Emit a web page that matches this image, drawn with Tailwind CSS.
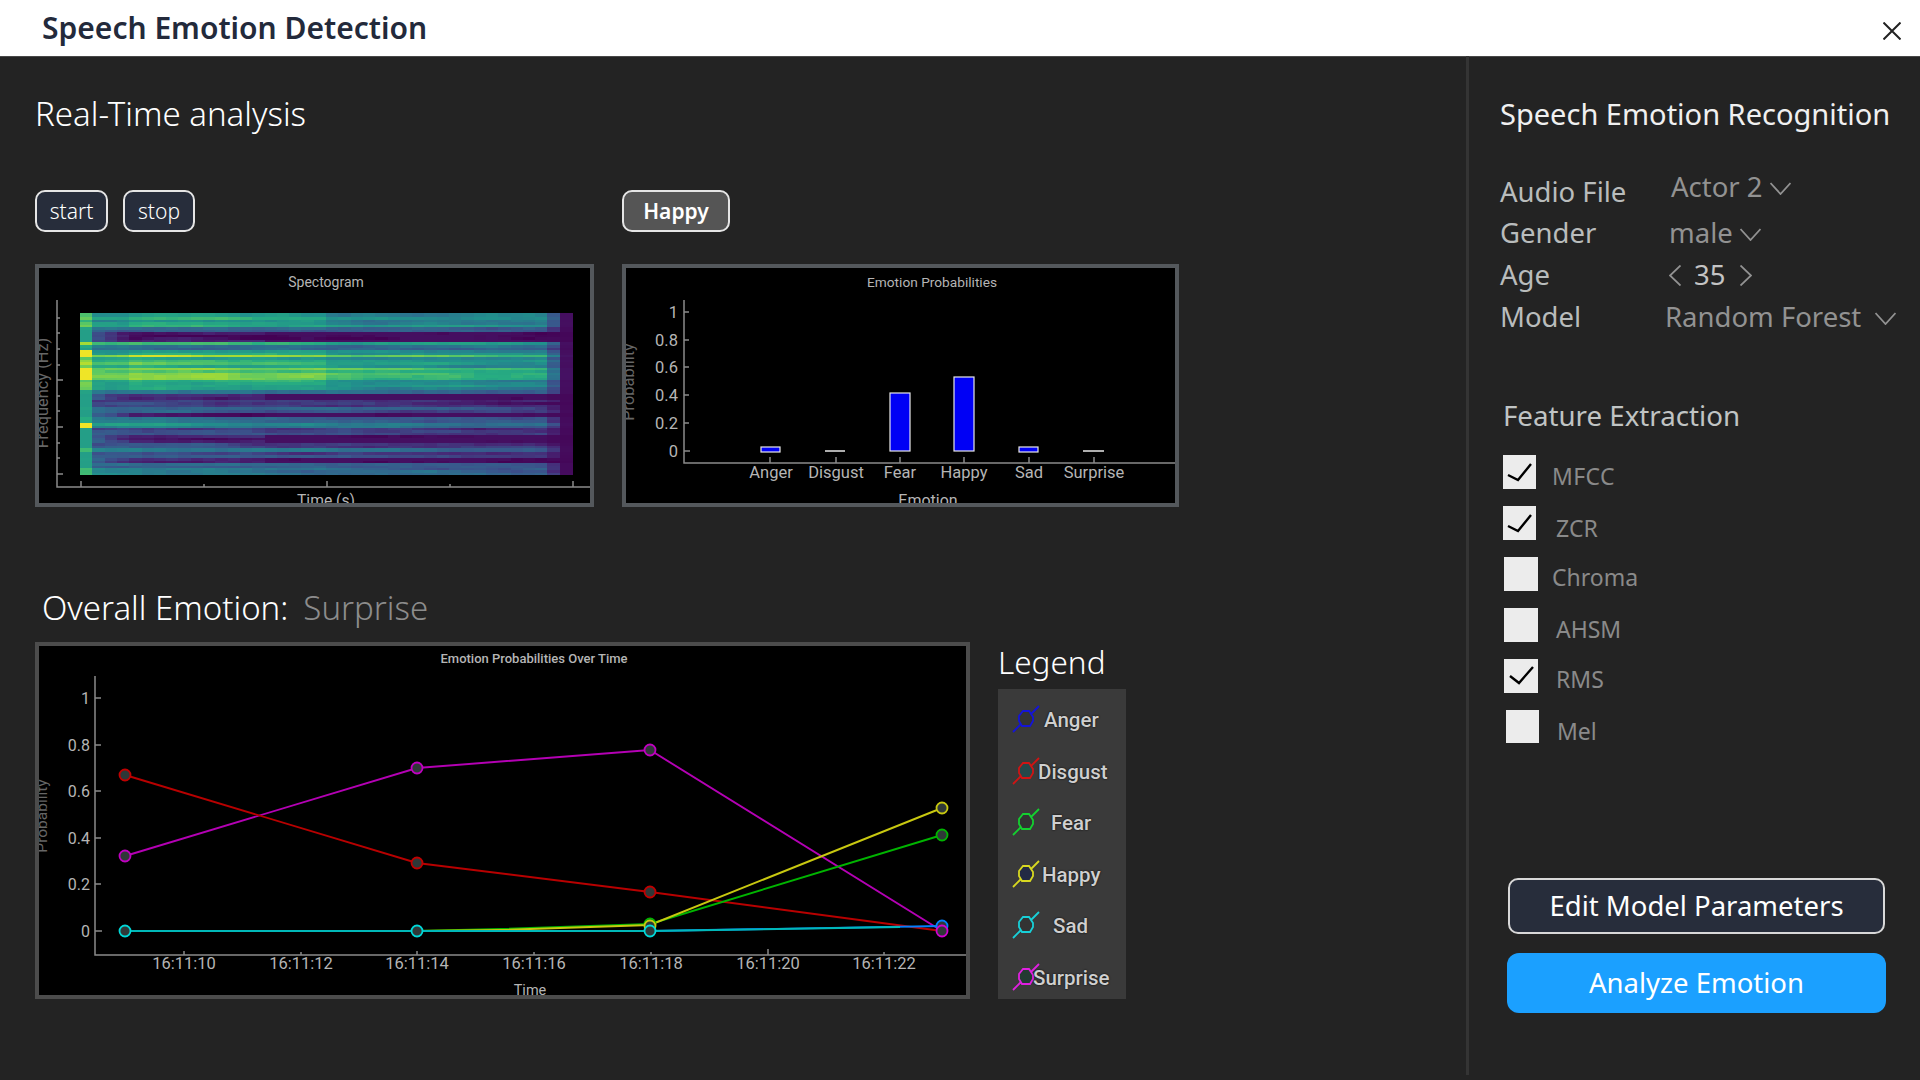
<!DOCTYPE html>
<html lang="en">
<head>
<meta charset="utf-8">
<title>Speech Emotion Detection</title>
<script src="https://cdn.jsdelivr.net/npm/@tailwindcss/browser@4"></script>
</head>
<body class="w-[1920px] h-[1080px] overflow-hidden bg-[#232323] font-['Noto_Sans',sans-serif] flex flex-col">
<header class="h-[56px] bg-white flex items-center justify-between pl-[42px] pr-[19px]">
  <h1 class="text-[30px] font-semibold text-[#232a3b] leading-none">Speech Emotion Detection</h1>
  <svg class="w-[18px] h-[18px] mt-[6px]" viewBox="0 0 18 18" fill="none" stroke="#222" stroke-width="2"><path d="M0.5 0.5 17.5 17.5M17.5 0.5 0.5 17.5"/></svg>
</header>
<main class="flex flex-1 shadow-[inset_0_1px_0_#484848]">
  <section class="w-[1469px] h-[1019px] pl-[35px] border-r-[3px] border-[#343434] flex flex-col">
    <h2 class="mt-[38px] h-[40px] leading-[40px] text-[33px] text-white font-light">Real-Time analysis</h2>
    <div class="mt-[56px] flex h-[42px]">
      <button class="w-[73px] h-[42px] pt-[2px] rounded-[10px] border-2 border-[#e5e5e5] bg-[#272d3b] text-white text-[21px] font-light">start</button>
      <button class="ml-[15px] w-[72px] h-[42px] pt-[2px] rounded-[10px] border-2 border-[#e5e5e5] bg-[#272d3b] text-white text-[21px] font-light">stop</button>
      <button class="ml-[427px] w-[108px] h-[42px] pt-[2px] rounded-[10px] border-2 border-[#e5e5e5] bg-[#555] text-white text-[21px] font-semibold">Happy</button>
    </div>
    <div class="mt-[32px] flex gap-[28px]">
      <div class="w-[559px] h-[243px] border-[4px] border-[#54585c] bg-black">
        <svg class="block font-['Roboto',sans-serif]" width="551" height="235" viewBox="39 268 551 235">
          <g id="spec" shape-rendering="crispEdges"></g>
          <text x="326" y="287" text-anchor="middle" class="fill-[#b5b5b5] text-[14px]">Spectogram</text>
          <path d="M57 300V487H590M81 481V487M327 481V487M573 481V487M204 484V487M450 484V487M57 380H63M57 427H63M57 474H63M57 333H60M57 318H60M57 349H60M57 365H60M57 396H60M57 411H60M57 443H60M57 458H60" stroke="#8a8a8a" stroke-width="1.5" fill="none"/>
          <text x="326" y="506" text-anchor="middle" class="fill-[#b5b5b5] text-[15.7px]">Time (s)</text>
          <text transform="translate(48 393) rotate(-90)" text-anchor="middle" class="fill-[#666] text-[16.4px]">Frequency (Hz)</text>
        </svg>
      </div>
      <div class="w-[557px] h-[243px] border-[4px] border-[#54585c] bg-black">
        <svg class="block font-['Roboto',sans-serif]" width="549" height="235" viewBox="626 268 549 235">
          <text x="932" y="287" text-anchor="middle" class="fill-[#b5b5b5] text-[13.7px]">Emotion Probabilities</text>
          <path d="M684 300V463H1175M684 312H689M684 340H689M684 367H689M684 395H689M684 423H689M684 451H690M770 457V463M836 457V463M900 457V463M964 457V463M1029 457V463M1094 457V463" stroke="#8a8a8a" stroke-width="1.5" fill="none"/>
          <g class="fill-[#b5b5b5] text-[16.5px]" text-anchor="end">
            <text x="678" y="318">1</text><text x="678" y="346">0.8</text><text x="678" y="373">0.6</text><text x="678" y="401">0.4</text><text x="678" y="429">0.2</text><text x="678" y="457">0</text>
          </g>
          <g fill="#0000f5" stroke="#e8e8e8" stroke-width="1.2">
            <rect x="761" y="447" width="19" height="5"/>
            <rect x="890" y="393" width="20" height="58"/>
            <rect x="954" y="377" width="20" height="74"/>
            <rect x="1019" y="447" width="19" height="5"/>
          </g>
          <path d="M825 451H845M1083 451H1104" stroke="#e8e8e8" stroke-width="1.5"/>
          <g class="fill-[#b5b5b5] text-[16.5px]" text-anchor="middle">
            <text x="771" y="478">Anger</text><text x="836" y="478">Disgust</text><text x="900" y="478">Fear</text><text x="964" y="478">Happy</text><text x="1029" y="478">Sad</text><text x="1094" y="478">Surprise</text>
          </g>
          <text x="928" y="506" text-anchor="middle" class="fill-[#b5b5b5] text-[16px]">Emotion</text>
          <text transform="translate(634 382) rotate(-90)" text-anchor="middle" class="fill-[#666] text-[16.4px]">Probability</text>
        </svg>
      </div>
    </div>
    <h2 class="mt-[81px] h-[40px] leading-[40px] pl-[7px] text-[33px] font-light text-white">Overall Emotion:<span class="ml-[15px] text-[#8c8c8c]">Surprise</span></h2>
    <div class="mt-[14px] flex gap-[28px]">
      <div class="w-[935px] h-[357px] border-[4px] border-[#4c4c4c] bg-black">
        <svg class="block font-['Roboto',sans-serif]" width="927" height="349" viewBox="39 646 927 349">
          <text x="534" y="663" text-anchor="middle" class="fill-[#b5b5b5] text-[13px] font-medium">Emotion Probabilities Over Time</text>
          <path d="M95 676V955H966M95 698H101M95 745H101M95 791H101M95 838H101M95 884H101M95 931H102M184 951V955M301 952V955M417 951V955M534 952V955M651 952V955M768 949V955M884 952V955" stroke="#8a8a8a" stroke-width="1.5" fill="none"/>
          <g class="fill-[#b5b5b5] text-[16px]" text-anchor="end">
            <text x="90" y="704">1</text><text x="90" y="751">0.8</text><text x="90" y="797">0.6</text><text x="90" y="844">0.4</text><text x="90" y="890">0.2</text><text x="90" y="937">0</text>
          </g>
          <g class="fill-[#b5b5b5] text-[16.5px]" text-anchor="middle">
            <text x="184" y="969">16:11:10</text><text x="301" y="969">16:11:12</text><text x="417" y="969">16:11:14</text><text x="534" y="969">16:11:16</text><text x="651" y="969">16:11:18</text><text x="768" y="969">16:11:20</text><text x="884" y="969">16:11:22</text>
          </g>
          <text x="530" y="995" text-anchor="middle" class="fill-[#b5b5b5] text-[14.5px]">Time</text>
          <text transform="translate(47 816) rotate(-90)" text-anchor="middle" class="fill-[#666] text-[15.5px]">Probability</text>
          <g fill="none" stroke-width="1.9">
            <polyline stroke="#b400b4" points="125,856 417,768 650,750 942,931"/>
            <polyline stroke="#b80000" points="125,775 417,863 650,892 942,931"/>
            <polyline stroke="#00b400" points="417,931 500,929 650,924 942,835"/>
            <polyline stroke="#c8c810" points="417,931 500,930 650,925 942,808"/>
            <polyline stroke="#0080ff" points="650,931 942,926"/>
            <polyline stroke="#00b8b8" points="125,931 417,931 650,931 900,927"/>
          </g>
          <g fill="#2f3838" stroke-width="1.8">
            <g stroke="#0080ff"><circle cx="942" cy="926" r="5.5"/></g>
            <g stroke="#c000c0"><circle cx="125" cy="856" r="5.5"/><circle cx="417" cy="768" r="5.5"/><circle cx="650" cy="750" r="5.5"/></g>
            <g stroke="#c00000"><circle cx="125" cy="775" r="5.5"/><circle cx="417" cy="863" r="5.5"/><circle cx="650" cy="892" r="5.5"/></g>
            <g stroke="#00b400"><circle cx="650" cy="924" r="5.5"/><circle cx="942" cy="835" r="5.5"/></g>
            <g stroke="#c8c810"><circle cx="650" cy="926" r="5.5"/><circle cx="942" cy="808" r="5.5"/></g>
            <g stroke="#00d8d8"><circle cx="125" cy="931" r="5.5"/><circle cx="417" cy="931" r="5.5"/><circle cx="650" cy="931" r="5.5"/></g>
            <g stroke="#d000d0"><circle cx="942" cy="931" r="5.5"/></g>
          </g>
        </svg>
      </div>
      <div class="w-[128px]">
        <h3 class="h-[47px] leading-[40px] text-[31.5px] font-light text-white">Legend</h3>
        <ul class="h-[310px] bg-[#3a3a3a] text-[20.5px] font-['Roboto',sans-serif] font-medium text-[#cfcfcf] [text-shadow:0_0_2px_#000] overflow-hidden">
          <li class="h-[51.5px] flex items-center pl-[14px] pt-[12px]">
            <svg class="w-[28px] h-[28px] -mt-[3px]" viewBox="0 0 28 28" fill="none" stroke="#1414d8" stroke-width="1.8"><path d="M1 27 9 19M19 9 27 1"/><path d="M11 6H17L21 12V16L18 21H10L7 16V11Z" fill="#333"/></svg>
            <span class="ml-[4px]">Anger</span>
          </li>
          <li class="h-[51.5px] flex items-center pl-[14px] pt-[12px]">
            <svg class="w-[28px] h-[28px] -mt-[3px]" viewBox="0 0 28 28" fill="none" stroke="#d01414" stroke-width="1.8"><path d="M1 27 9 19M19 9 27 1"/><path d="M11 6H17L21 12V16L18 21H10L7 16V11Z" fill="#24484a"/></svg>
            <span class="-ml-[2px]">Disgust</span>
          </li>
          <li class="h-[51.5px] flex items-center pl-[14px] pt-[12px]">
            <svg class="w-[28px] h-[28px] -mt-[3px]" viewBox="0 0 28 28" fill="none" stroke="#14d030" stroke-width="1.8"><path d="M1 27 9 19M19 9 27 1"/><path d="M11 6H17L21 12V16L18 21H10L7 16V11Z" fill="#333"/></svg>
            <span class="ml-[11px]">Fear</span>
          </li>
          <li class="h-[51.5px] flex items-center pl-[14px] pt-[12px]">
            <svg class="w-[28px] h-[28px] -mt-[3px]" viewBox="0 0 28 28" fill="none" stroke="#d8d820" stroke-width="1.8"><path d="M1 27 9 19M19 9 27 1"/><path d="M11 6H17L21 12V16L18 21H10L7 16V11Z" fill="#222a44"/></svg>
            <span class="ml-[2px]">Happy</span>
          </li>
          <li class="h-[51.5px] flex items-center pl-[14px] pt-[12px]">
            <svg class="w-[28px] h-[28px] -mt-[3px]" viewBox="0 0 28 28" fill="none" stroke="#18d0d8" stroke-width="1.8"><path d="M1 27 9 19M19 9 27 1"/><path d="M11 6H17L21 12V16L18 21H10L7 16V11Z" fill="#333"/></svg>
            <span class="ml-[13px]">Sad</span>
          </li>
          <li class="h-[51.5px] flex items-center pl-[14px] pt-[12px]">
            <svg class="w-[28px] h-[28px] -mt-[3px] shrink-0" viewBox="0 0 28 28" fill="none" stroke="#e020e0" stroke-width="1.8"><path d="M1 27 9 19M19 9 27 1"/><path d="M11 6H17L21 12V16L18 21H10L7 16V11Z" fill="#233a33"/></svg>
            <span class="-ml-[7px]">Surprise</span>
          </li>
        </ul>
      </div>
    </div>
  </section>
  <aside class="flex-1 pl-[31px] flex flex-col">
    <h2 class="mt-[38px] h-[40px] leading-[40px] text-[29px] text-[#f0f0f0] whitespace-nowrap">Speech Emotion Recognition</h2>
    <div class="mt-[37px] grid grid-cols-[165px_1fr] auto-rows-[42px] items-center text-[27.5px] text-[#b9bcbc]">
      <span>Audio File</span>
      <div class="flex items-center pb-[10px] pl-[6px] text-[#929292]">Actor 2<svg class="ml-[7px] w-[21px] h-[13px] mt-[2px]" viewBox="0 0 21 13" fill="none" stroke="#929292" stroke-width="1.8"><path d="M0.5 1 10.5 12 20.5 1"/></svg></div>
      <span class="-mt-[2px]">Gender</span>
      <div class="flex items-center pl-[4px] -mt-[2px] text-[#929292]">male<svg class="ml-[7px] w-[21px] h-[13px] mt-[2px]" viewBox="0 0 21 13" fill="none" stroke="#929292" stroke-width="1.8"><path d="M0.5 1 10.5 12 20.5 1"/></svg></div>
      <span class="-mt-[2px]">Age</span>
      <div class="flex items-center pl-[4px] -mt-[2px]"><svg class="w-[12px] h-[21px]" viewBox="0 0 12 21" fill="none" stroke="#929292" stroke-width="1.8"><path d="M11.5 0.5 1 10.5 11.5 20.5"/></svg><span class="ml-[13px] w-[46px] text-[#c4c4c4]">35</span><svg class="w-[12px] h-[21px]" viewBox="0 0 12 21" fill="none" stroke="#929292" stroke-width="1.8"><path d="M0.5 0.5 11 10.5 0.5 20.5"/></svg></div>
      <span class="-mt-[2px]">Model</span>
      <div class="flex items-center -mt-[2px] text-[#929292] whitespace-nowrap">Random Forest<svg class="ml-[14px] w-[21px] h-[13px] mt-[2px]" viewBox="0 0 21 13" fill="none" stroke="#929292" stroke-width="1.8"><path d="M0.5 1 10.5 12 20.5 1"/></svg></div>
    </div>
    <h3 class="mt-[58px] ml-[3px] h-[36px] leading-[36px] text-[27.7px] text-[#c0c4c4]">Feature Extraction</h3>
    <ul class="mt-[22px] ml-[1px] text-[23px] text-[#8a8a8a]">
      <li class="h-[51px] flex ml-[2px]">
        <span class="w-[33px] h-[34px] bg-[#ececec]"><svg width="33" height="34" viewBox="0 0 33 34" fill="none" stroke="#000" stroke-width="2.4"><path d="M5 20 15 25 28 9"/></svg></span>
        <span class="ml-[16px] mt-[4px] h-[34px] leading-[34px] tracking-[0.4px]">MFCC</span>
      </li>
      <li class="h-[51px] flex ml-[2px]">
        <span class="w-[33px] h-[34px] bg-[#ececec]"><svg width="33" height="34" viewBox="0 0 33 34" fill="none" stroke="#000" stroke-width="2.4"><path d="M5 20 15 25 28 9"/></svg></span>
        <span class="ml-[20px] mt-[5px] h-[34px] leading-[34px]">ZCR</span>
      </li>
      <li class="h-[51px] flex ml-[3px]">
        <span class="w-[34px] h-[34px] bg-[#ececec]"></span>
        <span class="ml-[14px] mt-[3px] h-[34px] leading-[34px]">Chroma</span>
      </li>
      <li class="h-[51px] flex ml-[3px]">
        <span class="w-[34px] h-[34px] bg-[#ececec]"></span>
        <span class="ml-[18px] mt-[4px] h-[34px] leading-[34px]">AHSM</span>
      </li>
      <li class="h-[51px] flex ml-[3px]">
        <span class="w-[34px] h-[34px] bg-[#ececec]"><svg width="34" height="34" viewBox="0 0 34 34" fill="none" stroke="#000" stroke-width="2.4"><path d="M6 17 15 24 29 8"/></svg></span>
        <span class="ml-[18px] mt-[3px] h-[34px] leading-[34px]">RMS</span>
      </li>
      <li class="h-[51px] flex ml-[5px]">
        <span class="w-[33px] h-[33px] bg-[#ececec]"></span>
        <span class="ml-[18px] mt-[4px] h-[34px] leading-[34px]">Mel</span>
      </li>
    </ul>
    <button class="mt-[117px] ml-[8px] w-[377px] h-[56px] rounded-[10px] border-2 border-[#d8d8d8] bg-[#272d3b] text-[27.5px] text-white">Edit Model Parameters</button>
    <button class="mt-[19px] ml-[7px] w-[379px] h-[60px] rounded-[12px] bg-[#1ba0ff] text-[27.5px] text-white">Analyze Emotion</button>
  </aside>
</main>
<script>
(function(){
  var stops=[[0,[68,1,84]],[.13,[71,38,117]],[.25,[59,82,139]],[.38,[44,114,142]],[.5,[33,145,140]],[.63,[39,173,129]],[.75,[94,201,98]],[.88,[170,220,50]],[1,[253,231,37]]];
  function vir(v){v=Math.max(0,Math.min(1,v));for(var i=1;i<stops.length;i++){if(v<=stops[i][0]){var a=stops[i-1],b=stops[i],t=(v-a[0])/(b[0]-a[0]);return 'rgb('+[0,1,2].map(function(k){return Math.round(a[1][k]+(b[1][k]-a[1][k])*t)}).join(',')+')';}}return '#fde725';}
  /* band table: [start y, end y, level] in page pixels */
  var bands=[[313,317,.58],[317,322,.5],[322,327,.55],[327,332,.36],[332,342,.07],[342,345,.62],[345,350,.38],[350,355,.54],[355,357,.8],[357,362,.62],[362,365,.68],[365,368,.5],[368,375,.76],[375,380,.72],[380,387,.55],[387,390,.5],[390,394,.42],[394,400,.12],[400,407,.22],[407,413,.36],[413,417,.07],[417,423,.4],[423,428,.54],[428,435,.26],[435,443,.1],[443,448,.3],[448,452,.48],[452,458,.24],[458,463,.12],[463,468,.38],[468,475,.48]];
  var rows=[],seed=7,rowH=2.7;
  function rnd(){seed=(seed*16807)%2147483647;return seed/2147483647;}
  bands.forEach(function(b){
    var n=Math.max(1,Math.round((b[1]-b[0])/rowH)),h=(b[1]-b[0])/n;
    for(var i=0;i<n;i++)rows.push({y:b[0]+i*h,h:h,v:b[2],off:(rnd()-.5)*(b[2]<.2?.05:.14),tag:b[2],walk:0});
  });
  var g=document.getElementById('spec'),ns='http://www.w3.org/2000/svg';
  var colW=12.3,x0=80,cols=40;
  for(var c=0;c<cols;c++){
    rows.forEach(function(b){
      var x=x0+c*colW,t=c/(cols-1),dark=b.tag<.2,low=b.y>394;
      b.walk=b.walk*.85+(rnd()-.5)*.07;
      var v=b.v+b.off;
      v=v*(1-(low?.42:.22)*t)+b.walk;
      if(dark&&c<4)v+=.22*(1-c/4);
      if(dark&&c>14)v=Math.min(v,.05);
      if(c===0){v=Math.max(.56,v+.2);if(b.tag>=.7||b.tag===.54)v=.98;}
      if(!low&&b.tag>=.5&&c>=4&&c<=19)v+=.07;
      if(c===38)v=v*.62;
      if(c===39)v=.02+v*.06;
      var r=document.createElementNS(ns,'rect');
      r.setAttribute('x',x);r.setAttribute('y',b.y);r.setAttribute('width',colW+.5);r.setAttribute('height',b.h);r.setAttribute('fill',vir(v));
      g.appendChild(r);
    });
  }
})();
</script>
</body>
</html>
